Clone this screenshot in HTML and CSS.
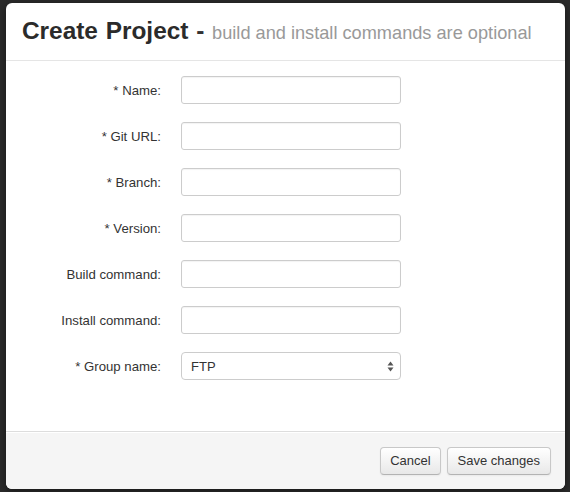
FILE: index.html
```html
<!DOCTYPE html>
<html>
<head>
<meta charset="utf-8">
<link rel="stylesheet" href="styles.css">
</head>
<body>
<div class="modal">
  <div class="modal-header">
    <h3 class="title">Create Project <span class="dash">-</span> <small>build and install commands are optional</small></h3>
  </div>
  <div class="modal-body">
    <div class="row"><label>* Name:</label><input class="field" type="text"></div>
    <div class="row"><label>* Git URL:</label><input class="field" type="text"></div>
    <div class="row"><label>* Branch:</label><input class="field" type="text"></div>
    <div class="row"><label>* Version:</label><input class="field" type="text"></div>
    <div class="row"><label>Build command:</label><input class="field" type="text"></div>
    <div class="row"><label>Install command:</label><input class="field" type="text"></div>
    <div class="row"><label>* Group name:</label>
      <div class="select"><span>FTP</span>
        <svg class="arrows" width="7" height="11" viewBox="0 0 7 11"><path d="M3.5 0.5 L6.5 4.5 H0.5 Z M3.5 10.5 L6.5 6.5 H0.5 Z" fill="#555"/></svg>
      </div>
    </div>
  </div>
  <div class="modal-footer">
    <button class="btn btn-cancel">Cancel</button>
    <button class="btn">Save changes</button>
  </div>
</div>
</body>
</html>
```
FILE: styles.css
```css
html, body {
  margin: 0;
  padding: 0;
  background: #2b2b2b;
  width: 570px;
  height: 492px;
  overflow: hidden;
  font-family: "Liberation Sans", Arial, sans-serif;
  color: #333;
}
.modal {
  margin: 3px 0 0 6px;
  width: 559px;
  height: 486px;
  background: #fff;
  border-radius: 6px;
  display: flex;
  flex-direction: column;
  overflow: hidden;
  box-shadow: 0 2px 8px rgba(0,0,0,0.5);
}
.modal-header {
  height: 57px;
  border-bottom: 1px solid #e5e5e5;
  display: flex;
  align-items: center;
  padding: 0 15px 0 16px;
  flex: none;
}
.title {
  margin: 0;
  font-size: 24.4px;
  font-weight: bold;
  color: #2b2b2b;
  line-height: 30px;
  padding-top: 1px;
  word-spacing: 1px;
}
.title small {
  font-size: 18.2px;
  font-weight: normal;
  color: #999;
  word-spacing: 0;
}
.dash { color: #333; }
.modal-body {
  flex: 1;
  padding: 15px 0 0 0;
  display: flex;
  flex-direction: column;
  gap: 18px;
}
.row {
  display: flex;
  align-items: center;
  height: 28px;
}
.row label {
  width: 155px;
  text-align: right;
  font-size: 13.2px;
  color: #333;
  margin-right: 20px;
  flex: none;
}
.field {
  box-sizing: border-box;
  width: 220px;
  height: 28px;
  border: 1px solid #ccc;
  border-radius: 3px;
  padding: 4px 6px;
  margin: 0;
  box-shadow: inset 0 1px 1px rgba(0,0,0,0.05);
  background: #fff;
  font-family: inherit;
  font-size: 13px;
}
.select {
  box-sizing: border-box;
  width: 220px;
  height: 28px;
  border: 1px solid #ccc;
  border-radius: 4px;
  background: #fff;
  display: flex;
  align-items: center;
  justify-content: space-between;
  padding: 0 6px 0 9px;
  font-size: 13px;
  color: #333;
}
.arrows { display: block; }
.modal-footer {
  flex: none;
  height: 57px;
  border-top: 1px solid #ddd;
  background: #f5f5f5;
  display: flex;
  justify-content: flex-end;
  align-items: center;
  gap: 6px;
  padding: 0 14px 0 0;
  box-shadow: inset 0 1px 0 #fff;
}
.btn {
  height: 28px;
  padding: 0 10px;
  font-family: inherit;
  font-size: 13px;
  color: #333;
  background: linear-gradient(#ffffff, #e8e8e8);
  border: 1px solid #c8c8c8;
  border-bottom-color: #b3b3b3;
  border-radius: 4px;
  box-shadow: inset 0 1px 0 rgba(255,255,255,0.2), 0 1px 2px rgba(0,0,0,0.05);
  margin: 0;
}
.btn-cancel { padding: 0 9px; }
```
